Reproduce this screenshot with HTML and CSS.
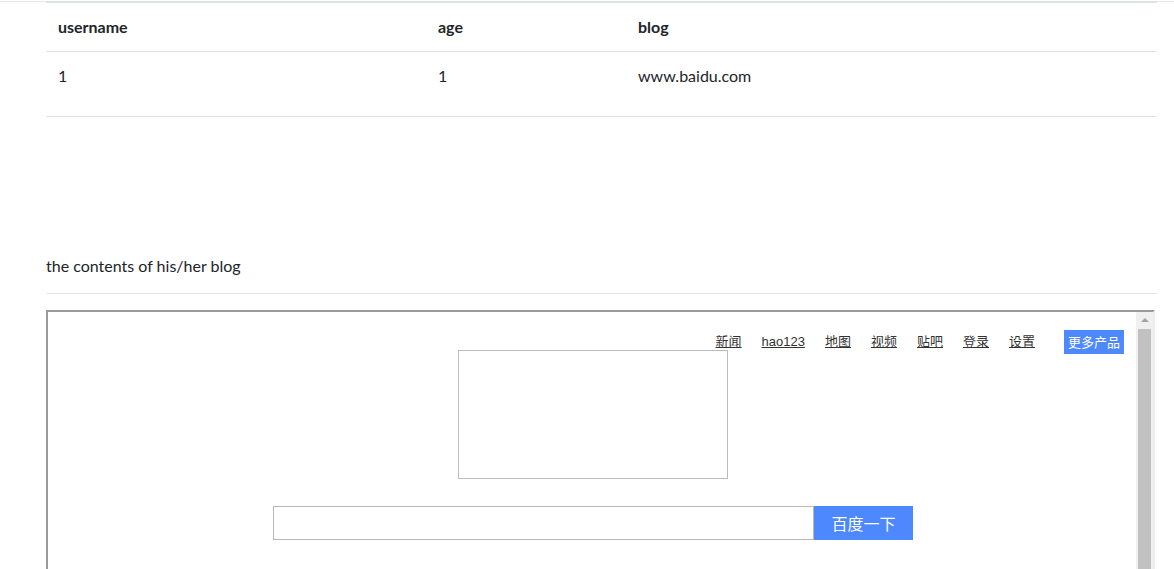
FILE: index.html
```html
<!DOCTYPE html>
<html lang="zh">
<head>
<meta charset="utf-8">
<title>blog</title>
<link rel="stylesheet" href="styles.css">
</head>
<body>
<div class="topbar"></div>
<main class="container">
  <table class="table">
    <thead>
      <tr><th class="c1">username</th><th class="c2">age</th><th class="c3">blog</th></tr>
    </thead>
    <tbody>
      <tr><td>1</td><td>1</td><td>www.baidu.com</td></tr>
    </tbody>
  </table>
  <p class="lead">the contents of his/her blog</p>
  <hr class="rule">
  <div class="frame">
    <div class="frame-content">
      <nav class="bd-nav">
        <a href="#">新闻</a>
        <a href="#">hao123</a>
        <a href="#">地图</a>
        <a href="#">视频</a>
        <a href="#">贴吧</a>
        <a href="#">登录</a>
        <a href="#">设置</a>
        <span class="more">更多产品</span>
      </nav>
      <div class="logo"></div>
      <form class="search">
        <span class="search-input"></span>
        <span class="search-btn">百度一下</span>
      </form>
    </div>
    <div class="scrollbar">
      <div class="arrow"></div>
      <div class="thumb"></div>
    </div>
  </div>
</main>
</body>
</html>
```
FILE: styles.css
```css
html, body {
  margin: 0;
  padding: 0;
  background: #fff;
}
body {
  font-family: Lato, "Open Sans", "Noto Sans CJK SC", sans-serif;
  font-size: 16px;
  line-height: 24px;
  color: #212529;
  overflow: hidden;
}
.topbar {
  height: 1px;
  border-bottom: 1px solid #e6e6e6;
}
.container {
  margin: -1px 17px 0 46px;
}
.table {
  width: 100%;
  border-collapse: collapse;
  border-top: 2px solid #dee2e6;
}
.table th, .table td {
  text-align: left;
  padding: 12px 12px;
  vertical-align: top;
}
.table th {
  font-weight: 700;
  border-bottom: 1px solid #dee2e6;
}
.table td {
  padding-bottom: 28px;
  border-bottom: 1px solid #dee2e6;
}
.c1 { width: 356px; }
.c2 { width: 176px; }
.lead {
  margin: 137px 0 15px 0;
}
.rule {
  margin: 0 0 16px 0;
  border: 0;
  border-top: 1px solid #e5e5e5;
  height: 0;
}
.frame {
  display: flex;
  height: 300px;
  border-style: solid;
  border-width: 2px;
  border-color: #9a9a9a #eeeeee #eeeeee #9a9a9a;
  margin-right: 2px;
  background: #fff;
}
.frame-content {
  position: relative;
  flex: 1;
  display: flex;
  flex-direction: column;
  align-items: center;
  padding-left: 2px;
  font-family: Arial, "Liberation Sans", "Noto Sans CJK SC", sans-serif;
}
.bd-nav {
  position: absolute;
  top: 18px;
  right: 12px;
  display: flex;
  align-items: center;
  font-size: 13px;
  line-height: 24px;
}
.bd-nav a {
  color: #333;
  text-decoration: underline;
  margin-right: 20px;
  font-family: "Liberation Sans", "Noto Sans CJK SC", sans-serif;
}
.bd-nav a:nth-child(7) {
  margin-right: 29px;
}
.more {
  display: block;
  width: 60px;
  height: 24px;
  background: #4e88ff;
  color: #fff;
  text-align: center;
  font-family: "Noto Sans CJK SC", sans-serif;
}
.logo {
  width: 268px;
  height: 127px;
  border: 1px solid #bcbcbc;
  margin-top: 38px;
}
.search {
  display: flex;
  margin: 27px 0 0 0;
}
.search-input {
  display: block;
  width: 539px;
  height: 32px;
  border: 1px solid #b8b8b8;
}
.search-btn {
  display: block;
  width: 99px;
  height: 34px;
  line-height: 34px;
  background: #4e88ff;
  color: #fff;
  text-align: center;
  font-size: 16px;
  font-family: "Noto Sans CJK SC", sans-serif;
}
.scrollbar {
  width: 17px;
  background: #f0f0f0;
  display: flex;
  flex-direction: column;
  align-items: center;
}
.arrow {
  width: 0;
  height: 0;
  margin-top: 6px;
  border-left: 4px solid transparent;
  border-right: 4px solid transparent;
  border-bottom: 4px solid #a3a3a3;
}
.thumb {
  width: 13px;
  flex: 1;
  margin-top: 7px;
  background: #c1c1c1;
}
```
